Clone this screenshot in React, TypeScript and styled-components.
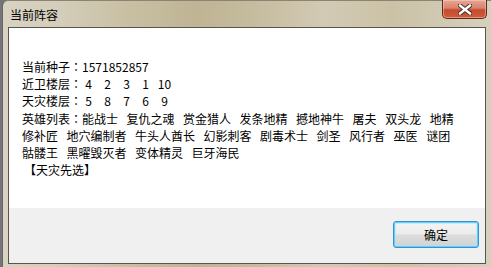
import * as React from "react";
import styled, { createGlobalStyle } from "styled-components";

const GlobalStyle = createGlobalStyle`
  html, body {
    margin: 0;
    padding: 0;
    background: #74747c;
  }
  body {
    font-family: "Noto Sans CJK SC", "Microsoft YaHei", sans-serif;
    font-size: 12px;
    color: #000;
  }
`;

const SEED = "1571852857";
const GUARD = ["4", "2", "3", "1", "10"];
const SCOURGE = ["5", "8", "7", "6", "9"];
const HERO_LINES = [
  ["能战士", "复仇之魂", "赏金猎人", "发条地精", "撼地神牛", "屠夫", "双头龙", "地精"],
  ["修补匠", "地穴编制者", "牛头人酋长", "幻影刺客", "剧毒术士", "剑圣", "风行者", "巫医", "谜团"],
  ["骷髅王", "黑曜毁灭者", "变体精灵", "巨牙海民"],
];

function CloseGlyph() {
  return (
    <svg width="14" height="11" viewBox="0 0 14 11">
      <path d="M2 1.5 L12 9.5 M12 1.5 L2 9.5" stroke="#3a2a26" strokeWidth="4.2" strokeLinecap="square" />
      <path d="M2 1.5 L12 9.5 M12 1.5 L2 9.5" stroke="#ffffff" strokeWidth="2.4" strokeLinecap="square" />
    </svg>
  );
}

function Lineup() {
  return (
    <Page>
      <GlobalStyle />
      <Window>
        <TitleBar>
          <Title>当前阵容</Title>
          <CloseButton>
            <CloseGlyph />
          </CloseButton>
        </TitleBar>
        <Client>
          <Content>
            <Line>
              当前种子<Colon>：</Colon>
              {SEED}
            </Line>
            <Line>
              近卫楼层<Colon>：</Colon>
              <Floors>
                {GUARD.map((n, i) => (
                  <Floor key={i}>{n}</Floor>
                ))}
              </Floors>
            </Line>
            <Line>
              天灾楼层<Colon>：</Colon>
              <Floors>
                {SCOURGE.map((n, i) => (
                  <Floor key={i}>{n}</Floor>
                ))}
              </Floors>
            </Line>
            {HERO_LINES.map((words, i) => (
              <Line key={i}>
                {i === 0 && (
                  <>
                    英雄列表<Colon>：</Colon>
                  </>
                )}
                {words.map((w) => (
                  <Word key={w}>{w}</Word>
                ))}
              </Line>
            ))}
            <Line>
              <Bracketed>【天灾先选】</Bracketed>
            </Line>
          </Content>
          <Footer>
            <OkButton type="button">确定</OkButton>
          </Footer>
        </Client>
      </Window>
    </Page>
  );
}

const Page = styled.div`
  width: 491px;
  height: 267px;
  overflow: hidden;
  display: flex;
`;

const Window = styled.div`
  margin-left: 2px;
  width: 489px;
  height: 267px;
  box-sizing: border-box;
  border-left: 1px solid #6a665a;
  border-top: 1px solid #8a8474;
  border-radius: 6px 0 0 0;
  display: flex;
  flex-direction: column;
  background: linear-gradient(
    90deg,
    #d8d3c2 0%,
    #d3cdb9 12%,
    #c9c0a4 25%,
    #bfb494 40%,
    #c6bc9f 52%,
    #d2cab4 66%,
    #cbc2a6 80%,
    #d6d0bd 100%
  );
`;

const TitleBar = styled.div`
  height: 26px;
  display: flex;
  align-items: flex-start;
  padding-left: 7px;
`;

const Title = styled.div`
  align-self: center;
  margin-top: 1px;
  font-size: 12px;
  color: #000;
`;

const CloseButton = styled.div`
  margin-left: auto;
  margin-right: 4px;
  margin-top: -1px;
  width: 45px;
  height: 19px;
  box-sizing: border-box;
  border: 1px solid #5e2a1e;
  border-top: none;
  border-radius: 0 0 5px 5px;
  background: linear-gradient(180deg, #e6a797 0%, #d9826c 45%, #c64a2e 55%, #cf5d3b 100%);
  box-shadow: inset 0 0 0 1px rgba(255, 220, 200, 0.45);
  display: flex;
  align-items: center;
  justify-content: center;
`;

const Client = styled.div`
  margin: 0 5px 3px 5px;
  flex: 1;
  border: 1px solid #56544d;
  display: flex;
  flex-direction: column;
`;

const Content = styled.div`
  height: 180px;
  background: #ffffff;
  box-sizing: border-box;
  padding: 30px 0 0 13px;
`;

const Line = styled.div`
  height: 17.2px;
  line-height: 17.2px;
  white-space: nowrap;
`;

const Colon = styled.span`
  font-family: "Noto Sans CJK TC", "Noto Sans CJK SC", sans-serif;
`;

const Bracketed = styled.span`
  margin-left: 2px;
`;

const Floors = styled.span`
  margin-left: -3px;
`;

const Floor = styled.span`
  display: inline-block;
  width: 19px;
  text-align: center;
`;

const Word = styled.span`
  margin-right: 8.5px;
`;

const Footer = styled.div`
  flex: 1;
  background: #f0f0f0;
  display: flex;
  justify-content: flex-end;
  align-items: flex-start;
  padding: 13px 6px 0 0;
`;

const OkButton = styled.button`
  width: 86px;
  height: 27px;
  box-sizing: border-box;
  border: 1px solid #3a8fd4;
  border-radius: 3px;
  font-family: "Noto Sans CJK SC", "Microsoft YaHei", sans-serif;
  font-size: 12px;
  color: #000;
  padding: 0;
  background: linear-gradient(180deg, #f3f3f3 0%, #ececec 48%, #dddddd 52%, #d2d2d2 100%);
  box-shadow: inset 0 0 0 1px #5fd2f7, inset 0 0 0 2px rgba(160, 230, 255, 0.5);
`;

export default Lineup;
